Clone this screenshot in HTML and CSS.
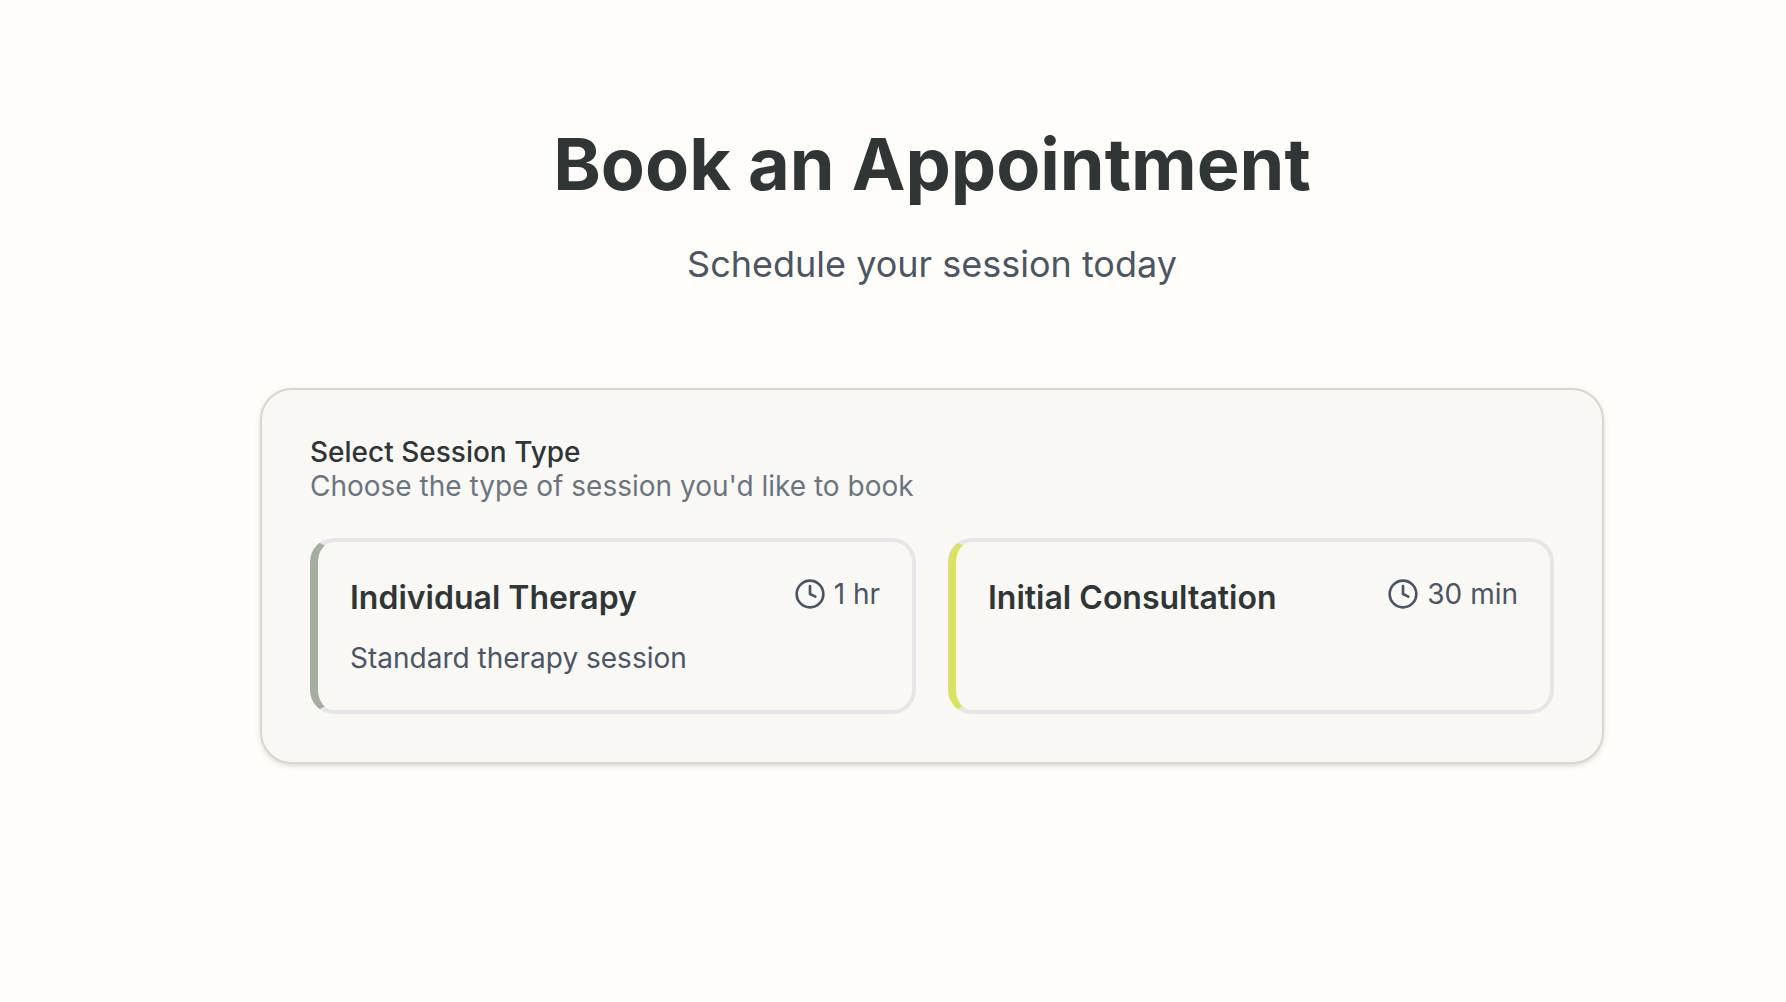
FILE: index.html
```html
<!DOCTYPE html>
<html lang="en">
<head>
<meta charset="utf-8">
<meta name="viewport" content="width=device-width, initial-scale=1">
<title>Book an Appointment</title>
<link rel="stylesheet" href="styles.css">
</head>
<body>
<main class="page">
  <header class="page-header">
    <h1 class="page-title">Book an Appointment</h1>
    <p class="page-subtitle">Schedule your session today</p>
  </header>
  <section class="card" aria-labelledby="session-heading">
    <div class="card-header">
      <h2 class="card-title" id="session-heading">Select Session Type</h2>
      <p class="card-description">Choose the type of session you'd like to book</p>
    </div>
    <div class="session-list">
      <button type="button" class="session session-sage">
        <span class="session-top">
          <span class="session-name">Individual Therapy</span>
          <span class="session-duration">
            <svg class="icon" viewBox="0 0 24 24" aria-hidden="true"><circle cx="12" cy="12" r="10"/><polyline points="12 6 12 12 16 14"/></svg>
            <span>1 hr</span>
          </span>
        </span>
        <span class="session-description">Standard therapy session</span>
      </button>
      <button type="button" class="session session-lime">
        <span class="session-top">
          <span class="session-name">Initial Consultation</span>
          <span class="session-duration">
            <svg class="icon" viewBox="0 0 24 24" aria-hidden="true"><circle cx="12" cy="12" r="10"/><polyline points="12 6 12 12 16 14"/></svg>
            <span>30 min</span>
          </span>
        </span>
      </button>
    </div>
  </section>
</main>
</body>
</html>
```
FILE: styles.css
```css
*,
*::before,
*::after {
  box-sizing: border-box;
}

body {
  margin: 0;
  background: #fffdf9;
  color: #303635;
  font-family: Inter, "Liberation Sans", sans-serif;
}

h1,
h2,
p {
  margin: 0;
}

.page {
  min-height: 100vh;
  padding: 124px 32px 96px 110px;
}

.page-header {
  margin-bottom: 96px;
  text-align: center;
}

.page-title {
  margin-bottom: 32px;
  font-size: 72px;
  font-weight: 700;
  line-height: 80px;
}

.page-subtitle {
  color: #4b5563;
  font-size: 36px;
  line-height: 56px;
}

.card {
  max-width: 1344px;
  margin: 0 auto;
  padding: 48px;
  border: 2px solid #dad6d0;
  border-radius: 32px;
  background: #f9f8f5;
  box-shadow: 0 2px 6px rgba(0, 0, 0, 0.1), 0 2px 4px -2px rgba(0, 0, 0, 0.1);
}

.card-header {
  margin-bottom: 32px;
}

.card-title {
  font-size: 28px;
  font-weight: 500;
  line-height: 28px;
}

.card-description {
  color: #6b7580;
  font-size: 28px;
  line-height: 40px;
}

.session-list {
  display: grid;
  grid-template-columns: repeat(2, minmax(0, 1fr));
  gap: 32px;
}

.session {
  display: flex;
  flex-direction: column;
  gap: 16px;
  padding: 32px;
  border: 4px solid #e6e6e8;
  border-left-width: 8px;
  border-radius: 24px;
  background: transparent;
  color: inherit;
  font: inherit;
  text-align: left;
  cursor: pointer;
}

.session-sage {
  border-left-color: #a3afa1;
}

.session-lime {
  border-left-color: #d9e264;
}

.session-top {
  display: flex;
  align-items: flex-start;
  justify-content: space-between;
  width: 100%;
}

.session-name {
  font-size: 32px;
  font-weight: 600;
  line-height: 48px;
}

.session-duration {
  display: flex;
  align-items: center;
  gap: 8px;
  color: #4b5563;
  font-size: 28px;
  line-height: 40px;
}

.session-description {
  color: #4b5563;
  font-size: 28px;
  line-height: 40px;
}

.icon {
  width: 32px;
  height: 32px;
  fill: none;
  stroke: currentColor;
  stroke-width: 2;
  stroke-linecap: round;
  stroke-linejoin: round;
}
```
